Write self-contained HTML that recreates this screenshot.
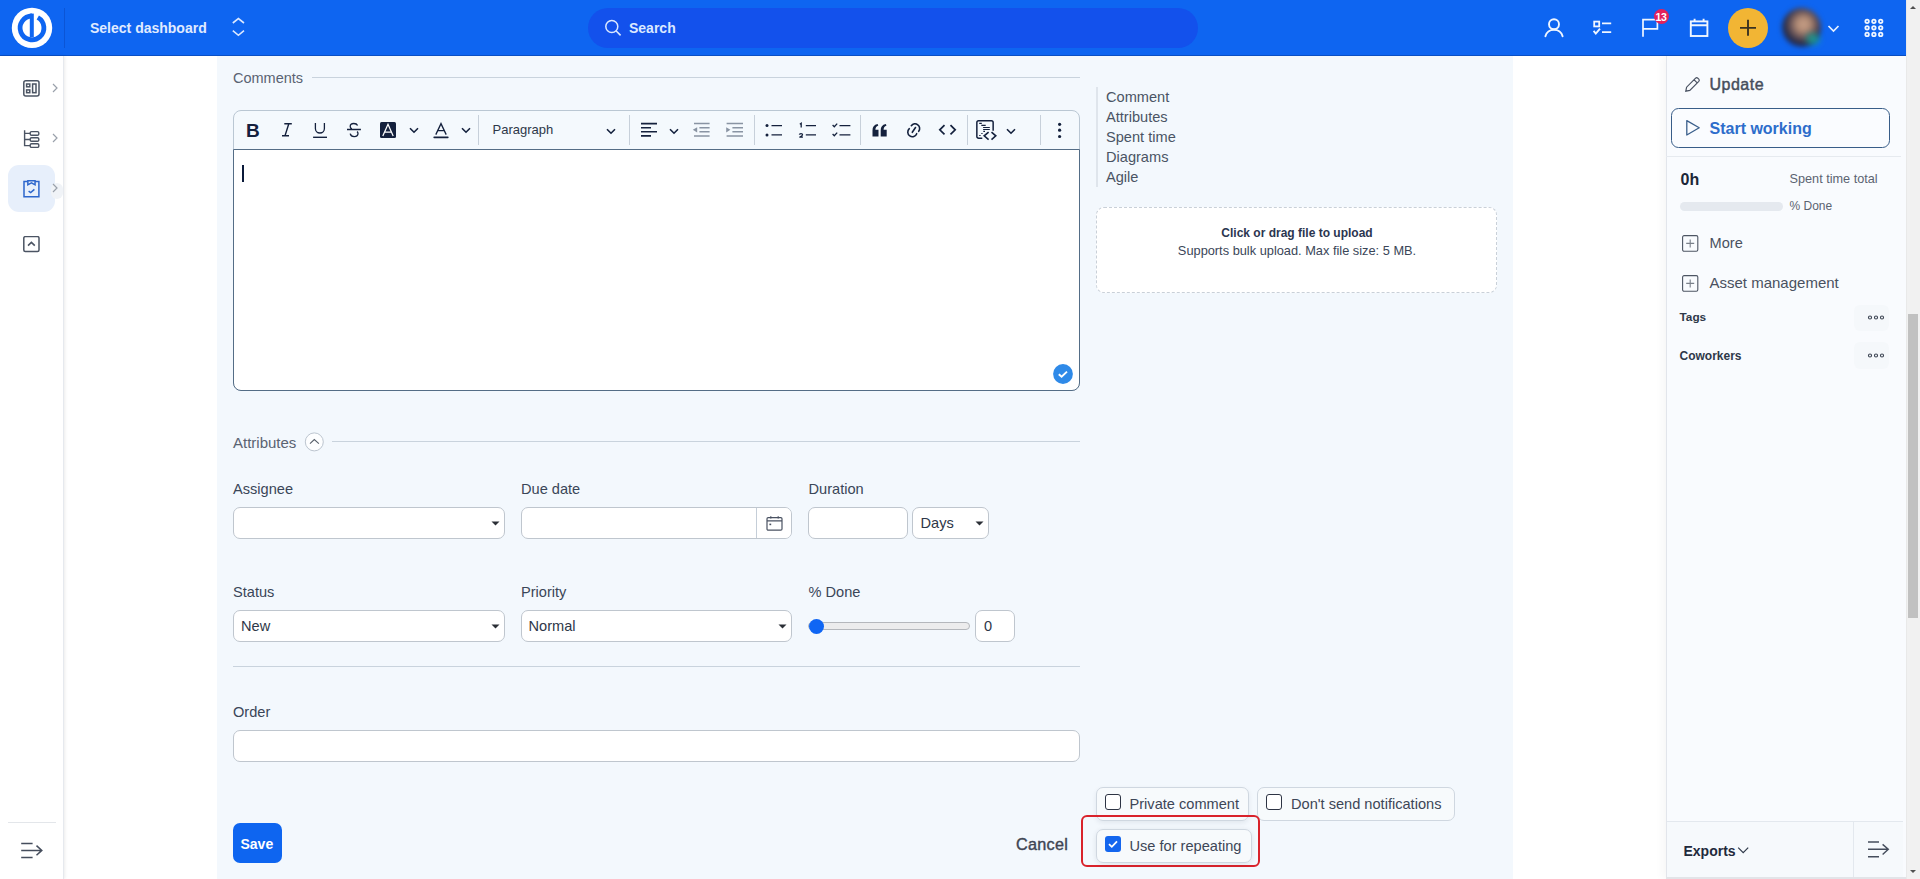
<!DOCTYPE html>
<html><head><meta charset="utf-8">
<style>
*{box-sizing:border-box;margin:0;padding:0}
html,body{width:1920px;height:879px;overflow:hidden;background:#fff;font-family:"Liberation Sans",sans-serif;color:#2e3a4e}
.a{position:absolute}
.t{line-height:1;white-space:nowrap}
svg{display:block}
#hdr{left:0;top:0;width:1906px;height:56px;background:#0e65f1}
#sb{left:0;top:56px;width:64px;height:823px;background:#fff;box-shadow:1px 0 3px rgba(0,0,0,.08);border-right:1px solid #e6e9ee}
#content{left:217px;top:56px;width:1296px;height:823px;background:#f4f8fc}
#rs{left:1666px;top:56px;width:239px;height:823px;background:#f9fbfe;border-left:1px solid #e3e7ec}
#scr{left:1905px;top:0;width:15px;height:879px;background:#f1f1f1;border-left:1px solid #e8e8e8}
.lbl{font-size:14px;color:#3a4658}
.inp{background:#fff;border:1px solid #c5ced8;border-radius:7px}
</style></head><body>
<!-- header -->
<div id="hdr" class="a">
 <svg class="a" style="left:11px;top:7px" width="42" height="42" viewBox="0 0 42 42">
  <circle cx="21" cy="20.9" r="20.2" fill="#fff"/>
  <path d="M21 9 A11.9 11.9 0 1 0 26.8 10.5" fill="none" stroke="#0e65f1" stroke-width="4.8"/>
  <rect x="18.8" y="6.6" width="4" height="23.8" fill="#0e65f1"/>
 </svg>
 <div class="a" style="left:64px;top:8px;width:1px;height:40px;background:#0b55d6"></div>
 <div class="a" style="left:90px;top:18px;font-size:14px;font-weight:700;color:#e0ebff;line-height:20px">Select dashboard</div>
 <svg class="a" style="left:230px;top:16px" width="16" height="22" viewBox="0 0 16 22"><path d="M2.8 7 L8.4 2.6 L14 7 M2.8 14.6 L8.4 19.3 L14 14.6" fill="none" stroke="#dbe8ff" stroke-width="1.6"/></svg>
 <div class="a" style="left:588px;top:8px;width:610px;height:40px;border-radius:20px;background:#1351ec"></div>
 <svg class="a" style="left:603px;top:18px" width="21" height="21" viewBox="0 0 21 21"><circle cx="8.8" cy="8.5" r="6.0" fill="none" stroke="#dbe8ff" stroke-width="1.5"/><path d="M13.2 13 L17.6 17.4" stroke="#dbe8ff" stroke-width="1.6"/></svg>
 <div class="a" style="left:629px;top:18px;font-size:14px;font-weight:700;color:#dce9ff;line-height:20px">Search</div>
 <!-- person -->
 <svg class="a" style="left:1542px;top:16px" width="24" height="24" viewBox="0 0 24 24"><circle cx="12" cy="8.2" r="5" fill="none" stroke="#f0f6ff" stroke-width="1.9"/><path d="M3.4 20.2 A8.8 8.2 0 0 1 20.6 20.2" fill="none" stroke="#f0f6ff" stroke-width="1.9" stroke-linecap="round"/></svg>
 <!-- tasks -->
 <svg class="a" style="left:1590px;top:16px" width="24" height="24" viewBox="0 0 24 24"><rect x="4.2" y="5.6" width="5" height="4.8" fill="none" stroke="#f0f6ff" stroke-width="1.8"/><path d="M12 7.3 H21.2 M12 16.2 H21.2" stroke="#f0f6ff" stroke-width="1.8"/><path d="M3.6 14.8 L5.8 17.6 L10 12.6" fill="none" stroke="#f0f6ff" stroke-width="1.9"/></svg>
 <!-- flag -->
 <svg class="a" style="left:1638px;top:16px" width="24" height="24" viewBox="0 0 24 24"><path d="M5 20.7 V3.6 H19.4 V12.8 H5" fill="none" stroke="#f0f6ff" stroke-width="1.7"/></svg>
 <div class="a" style="left:1653.6px;top:9.2px;width:15px;height:15px;border-radius:50%;background:#e3215c;color:#fff;font-size:10.5px;font-weight:700;text-align:center;line-height:16.5px;letter-spacing:-.4px;text-indent:-.3px">13</div>
 <!-- calendar -->
 <svg class="a" style="left:1687px;top:16px" width="24" height="24" viewBox="0 0 24 24"><rect x="3.8" y="5.4" width="16.6" height="14.6" fill="none" stroke="#f0f6ff" stroke-width="1.9"/><path d="M3.8 9.3 H20.4 M7.6 2.8 V6 M16.6 2.8 V6" stroke="#f0f6ff" stroke-width="1.9"/></svg>
 <!-- plus -->
 <div class="a" style="left:1728px;top:8px;width:40px;height:40px;border-radius:50%;background:#f2b534"></div>
 <svg class="a" style="left:1738px;top:18px" width="20" height="20" viewBox="0 0 20 20"><path d="M10 1.8 V17.8 M2 9.9 H18" stroke="#3b3220" stroke-width="1.9"/></svg>
 <!-- avatar -->
 <div class="a" style="left:1782px;top:8px;width:39px;height:39px;border-radius:50%;background:radial-gradient(circle at 55% 42%,#c8a088 0,#b08a74 22%,#6a5558 42%,#252a45 62%,#1b3a8a 80%,#0e65f1 100%);filter:blur(2.5px)"></div>
 <div class="a" style="left:1806px;top:33px;width:14px;height:12px;border-radius:50%;background:#1aa79a;filter:blur(3px);opacity:.8"></div>
 <svg class="a" style="left:1826px;top:22px" width="15" height="12" viewBox="0 0 15 12"><path d="M2.5 4 L7.5 9 L12.5 4" fill="none" stroke="#e6f0ff" stroke-width="1.7"/></svg>
 <!-- grid -->
 <svg class="a" style="left:1862px;top:16px" width="24" height="24" viewBox="0 0 24 24" fill="none" stroke="#f0f6ff" stroke-width="1.8">
  <circle cx="5.1" cy="5.3" r="1.75"/><circle cx="11.9" cy="5.3" r="1.75"/><circle cx="18.7" cy="5.3" r="1.75"/>
  <circle cx="5.1" cy="11.8" r="1.75"/><circle cx="11.9" cy="11.8" r="1.75"/><circle cx="18.7" cy="11.8" r="1.75"/>
  <circle cx="5.1" cy="18.4" r="1.75"/><circle cx="11.9" cy="18.4" r="1.75"/><circle cx="18.7" cy="18.4" r="1.75"/>
 </svg>
 <div class="a" style="left:0;top:55px;width:1906px;height:1px;background:#0a4fc4"></div>
</div>
<div id="sb" class="a">
 <svg class="a" style="left:23px;top:24px" width="17" height="17" viewBox="0 0 17 17" fill="none" stroke="#4b5463" stroke-width="1.5">
  <rect x="0.8" y="0.8" width="15.2" height="15.2" rx="2"/><rect x="3.6" y="4" width="3.2" height="2.8"/><rect x="3.6" y="9.9" width="3.2" height="2.8"/><rect x="9.6" y="4" width="3.4" height="8.7"/>
 </svg>
 <svg class="a" style="left:50px;top:26px" width="10" height="12" viewBox="0 0 10 12"><path d="M3 2 L7 6 L3 10" fill="none" stroke="#9aa1ab" stroke-width="1.2"/></svg>
 <svg class="a" style="left:23px;top:74px" width="17" height="18" viewBox="0 0 17 18" fill="none" stroke="#4b5463" stroke-width="1.4">
  <path d="M1.6 0.3 V15.6 H7.2 M1.6 3.4 H7.2 M1.6 9.5 H7.2"/><rect x="7.2" y="1.6" width="8.6" height="3.6" rx="1.3"/><rect x="7.2" y="7.7" width="8.6" height="3.6" rx="1.3"/><rect x="7.2" y="13.8" width="8.6" height="3.6" rx="1.3"/>
 </svg>
 <svg class="a" style="left:50px;top:76px" width="10" height="12" viewBox="0 0 10 12"><path d="M3 2 L7 6 L3 10" fill="none" stroke="#9aa1ab" stroke-width="1.2"/></svg>
 <div class="a" style="left:8px;top:109px;width:47px;height:47px;border-radius:11px;background:#e7effb"></div>
 <div class="a" style="left:51px;top:127px;width:12px;height:16px;border-radius:8px;background:#f0f3f7"></div>
 <svg class="a" style="left:22px;top:124px" width="18" height="19" viewBox="0 0 18 19" fill="none" stroke="#2d66cc" stroke-width="1.5">
  <path d="M5.85 1.4 H2 V16.8 H16.9 V1.4 H13.05"/><path d="M5.85 0.85 H13.05 V4.85 L9.45 2.85 L5.85 4.85 Z"/><path d="M6.6 11.1 L8.7 12.6 L12.4 9.4" stroke-width="1.5"/>
 </svg>
 <svg class="a" style="left:50px;top:126px" width="10" height="12" viewBox="0 0 10 12"><path d="M3 2 L7 6 L3 10" fill="none" stroke="#9aa1ab" stroke-width="1.2"/></svg>
 <svg class="a" style="left:23px;top:180px" width="17" height="17" viewBox="0 0 17 17" fill="none" stroke="#4b5463" stroke-width="1.5">
  <rect x="0.8" y="0.6" width="15.2" height="15" rx="1.5"/><path d="M5 9.6 L8.4 6.4 L11.8 9.6" stroke-width="1.6"/>
 </svg>
 <div class="a" style="left:8px;top:766px;width:48px;height:1px;background:#e3e6ea"></div>
 <svg class="a" style="left:19px;top:785px" width="26" height="18" viewBox="0 0 26 18" fill="none" stroke="#454d5c" stroke-width="1.5">
  <path d="M2.2 2.4 H13.6 M2.2 9.4 H22.8 M2.2 16.5 H13.6 M17.5 4.6 L22.8 9.4 L17.5 14.2"/>
 </svg>
</div>
<div class="a" style="left:217px;top:56px;width:1296px;height:823px;background:#f3f8fd"></div>
<div class="a t" style="left:233px;top:70.73px;font-size:14.5px;font-weight:400;color:#5a6372;">Comments</div>
<div class="a" style="left:312px;top:77px;width:768px;height:1px;background:#c9d3dd"></div>
<div class="a" style="left:233px;top:110px;width:847px;height:281px;border:1px solid #bac7d3;border-radius:8px;background:#f4f9fd"></div>
<div class="a" style="left:233px;top:149px;width:847px;height:242px;border:1px solid #546d86;border-radius:0 0 8px 8px;background:#fff"></div>
<div class="a" style="left:242px;top:165px;width:2px;height:17px;background:#0b1a3a"></div>
<svg class="a" style="left:1053px;top:364px" width="20" height="20" viewBox="0 0 20 20" ><circle cx="10" cy="10" r="9.9" fill="#2f8ae8"/><path d="M5.8 10.2 L8.6 12.8 L14 7.6" fill="none" stroke="#fff" stroke-width="1.9"/></svg>
<div class="a" style="left:478px;top:115px;width:1px;height:30px;background:#c7d0da"></div>
<div class="a" style="left:629px;top:115px;width:1px;height:30px;background:#c7d0da"></div>
<div class="a" style="left:754px;top:115px;width:1px;height:30px;background:#c7d0da"></div>
<div class="a" style="left:860px;top:115px;width:1px;height:30px;background:#c7d0da"></div>
<div class="a" style="left:967px;top:115px;width:1px;height:30px;background:#c7d0da"></div>
<div class="a" style="left:1040px;top:115px;width:1px;height:30px;background:#c7d0da"></div>
<div class="a t" style="left:246px;top:120.92px;font-size:19px;font-weight:700;color:#14213d;font-family:"Liberation Sans";">B</div>
<svg class="a" style="left:280px;top:122px" width="14" height="16" viewBox="0 0 14 16" ><path d="M4.3 1.7 H11.8 M2 13.7 H9 M8.8 1.7 L5 13.7" fill="none" stroke="#14213d" stroke-width="1.4"/></svg>
<svg class="a" style="left:312px;top:122px" width="16" height="17" viewBox="0 0 16 17" ><path d="M3.4 1.1 V6.5 A4.5 4.5 0 0 0 12.4 6.5 V1.1" fill="none" stroke="#14213d" stroke-width="1.3"/><path d="M1.1 15.3 H15" stroke="#14213d" stroke-width="1.4"/></svg>
<svg class="a" style="left:346px;top:122px" width="16" height="17" viewBox="0 0 16 17" ><path d="M11.6 3.6 C11 2.2 9.6 1.5 7.8 1.5 C5.6 1.5 4.2 2.7 4.2 4.4 C4.2 5.4 4.8 6.3 5.8 6.9 M4.2 11.6 C4.6 13.6 6.2 14.6 8.2 14.6 C10.4 14.6 12 13.5 12 11.6 C12 10.6 11.6 10 11 9.6 M1 7.5 H14.9" fill="none" stroke="#14213d" stroke-width="1.3"/></svg>
<svg class="a" style="left:380px;top:122px" width="16" height="16" viewBox="0 0 16 16" ><rect x="0" y="0" width="16" height="16" rx="1.5" fill="#14213d"/><path d="M2.8 13.9 L8 2.3 L13.2 13.9 M4.8 10.2 H11.2" fill="none" stroke="#fff" stroke-width="1.25"/></svg>
<svg class="a" style="left:408.5px;top:126.8px" width="10" height="7" viewBox="0 0 10 7" ><path d="M1 1.2 L5 5.2 L9 1.2" fill="none" stroke="#14213d" stroke-width="1.6"/></svg>
<svg class="a" style="left:433px;top:122px" width="16" height="17" viewBox="0 0 16 17" ><path d="M2.8 12.6 L8 1.6 L13.2 12.6 M4.8 8.6 H11.2" fill="none" stroke="#14213d" stroke-width="1.3"/><path d="M1.2 15.3 H14.8" stroke="#14213d" stroke-width="1.7" stroke-linecap="round"/></svg>
<svg class="a" style="left:461px;top:126.8px" width="10" height="7" viewBox="0 0 10 7" ><path d="M1 1.2 L5 5.2 L9 1.2" fill="none" stroke="#14213d" stroke-width="1.6"/></svg>
<div class="a t" style="left:492.5px;top:123.00px;font-size:13px;font-weight:400;color:#2d3748;">Paragraph</div>
<svg class="a" style="left:606px;top:128px" width="10" height="7" viewBox="0 0 10 7" ><path d="M1 1.2 L5 5.2 L9 1.2" fill="none" stroke="#14213d" stroke-width="1.6"/></svg>
<svg class="a" style="left:640px;top:122px" width="18" height="16" viewBox="0 0 18 16" ><path d="M1 1.6 H17 M1 5.8 H11 M1 9.7 H17 M1 13.9 H11" fill="none" stroke="#14213d" stroke-width="1.6"/></svg>
<svg class="a" style="left:669px;top:128px" width="10" height="7" viewBox="0 0 10 7" ><path d="M1 1.2 L5 5.2 L9 1.2" fill="none" stroke="#14213d" stroke-width="1.6"/></svg>
<svg class="a" style="left:691px;top:122px" width="20" height="16" viewBox="0 0 20 16" ><path d="M3 1.6 H18.6 M8.4 5.8 H18.6 M8.4 9.7 H18.6 M3 13.9 H18.6" fill="none" stroke="#8994a3" stroke-width="1.5"/><path d="M6.2 5.2 L1.8 7.8 L6.2 10.4 Z" fill="#8994a3"/></svg>
<svg class="a" style="left:725px;top:122px" width="20" height="16" viewBox="0 0 20 16" ><path d="M1.6 1.6 H18 M7.4 5.8 H18 M7.4 9.7 H18 M1.6 13.9 H18" fill="none" stroke="#8994a3" stroke-width="1.5"/><path d="M1.2 5.2 L5.4 7.8 L1.2 10.4 Z" fill="#8994a3"/></svg>
<svg class="a" style="left:764px;top:122px" width="20" height="16" viewBox="0 0 20 16" ><circle cx="3" cy="3.6" r="1.5" fill="#14213d"/><circle cx="3" cy="12.9" r="1.5" fill="#14213d"/><path d="M7.5 3.6 H18 M7.5 12.9 H18" stroke="#14213d" stroke-width="1.3"/></svg>
<svg class="a" style="left:798px;top:122px" width="20" height="17" viewBox="0 0 20 17" ><path d="M1.8 2.2 L3.2 1.3 V5.6" fill="none" stroke="#14213d" stroke-width="1.3"/><path d="M1.3 12.6 C1.4 11.9 2.1 11.6 3 11.6 C3.9 11.6 4.6 12.1 4.6 12.8 C4.6 13.6 3.6 14.2 1.4 15.2 H4.9" fill="none" stroke="#14213d" stroke-width="1.2"/><path d="M7.8 3.6 H18 M7.8 12.9 H18" stroke="#14213d" stroke-width="1.3"/></svg>
<svg class="a" style="left:831px;top:122px" width="21" height="16" viewBox="0 0 21 16" ><path d="M1.6 3 L3.3 4.7 L6.2 1.6 M1.6 12 L3.3 13.7 L6.2 10.6" fill="none" stroke="#14213d" stroke-width="1.3"/><path d="M8.5 3.6 H19.4 M8.5 12.9 H19.4" stroke="#14213d" stroke-width="1.3"/></svg>
<svg class="a" style="left:871px;top:122px" width="18" height="16" viewBox="0 0 18 16" ><path d="M1.5 14.5 V8.5 C1.5 5 3 2.7 6.6 2 L7.3 3.5 C5.4 4.2 4.5 5.6 4.4 7.8 H7.5 V14.5 Z M9.7 14.5 V8.5 C9.7 5 11.2 2.7 14.8 2 L15.5 3.5 C13.6 4.2 12.7 5.6 12.6 7.8 H15.7 V14.5 Z" fill="#14213d"/></svg>
<svg class="a" style="left:905px;top:121px" width="17" height="18" viewBox="0 0 17 18" ><path d="M6.3 4.7 A4.6 4.6 0 1 1 13.7 10.3 M4.3 7.7 A4.6 4.6 0 1 0 11.7 12.7 M7.3 11.3 L10.5 6.5" fill="none" stroke="#14213d" stroke-width="1.6" stroke-linecap="round"/></svg>
<svg class="a" style="left:938px;top:124px" width="19" height="12" viewBox="0 0 19 12" ><path d="M6.5 1.2 L1.8 5.8 L6.5 10.4 M12.5 1.2 L17.2 5.8 L12.5 10.4" fill="none" stroke="#14213d" stroke-width="1.7"/></svg>
<svg class="a" style="left:975px;top:119px" width="22" height="22" viewBox="0 0 22 22" ><path d="M7.3 19.15 H3.6 A1.75 1.75 0 0 1 1.85 17.4 V3.5 A1.75 1.75 0 0 1 3.6 1.75 H16.4 A1.75 1.75 0 0 1 18.15 3.5 V11.7" fill="none" stroke="#14213d" stroke-width="1.5"/><path d="M4.2 4.4 H6.8 M6.3 6.4 H10.7 M8.1 8.5 H14.8 M8.1 10.5 H14.8 M8.3 12.4 H10 M6.3 14.5 H7.6 M4.2 16.5 H5.6" stroke="#14213d" stroke-width="1.1"/><path d="M13.6 13.1 L9.2 16.8 L13.6 20.6 M16.5 13.1 L20.8 16.8 L16.5 20.6" fill="none" stroke="#14213d" stroke-width="1.6"/></svg>
<svg class="a" style="left:1005.5px;top:128px" width="10" height="7" viewBox="0 0 10 7" ><path d="M1 1.2 L5 5.2 L9 1.2" fill="none" stroke="#14213d" stroke-width="1.6"/></svg>
<svg class="a" style="left:1056px;top:121px" width="7" height="18" viewBox="0 0 7 18" ><circle cx="3.6" cy="3.3" r="1.6" fill="#14213d"/><circle cx="3.6" cy="9.2" r="1.6" fill="#14213d"/><circle cx="3.6" cy="15.5" r="1.6" fill="#14213d"/></svg>
<div class="a" style="left:1096px;top:87px;width:2px;height:100px;background:#dfe5ec"></div>
<div class="a t" style="left:1106px;top:89.64px;font-size:14.6px;font-weight:400;color:#4a5464;">Comment</div>
<div class="a t" style="left:1106px;top:109.64px;font-size:14.6px;font-weight:400;color:#4a5464;">Attributes</div>
<div class="a t" style="left:1106px;top:129.64px;font-size:14.6px;font-weight:400;color:#4a5464;">Spent time</div>
<div class="a t" style="left:1106px;top:149.64px;font-size:14.6px;font-weight:400;color:#4a5464;">Diagrams</div>
<div class="a t" style="left:1106px;top:169.64px;font-size:14.6px;font-weight:400;color:#4a5464;">Agile</div>
<div class="a" style="left:1096px;top:207px;width:401px;height:86px;background:#fff;border:1px dashed #c9d0d8;border-radius:8px"></div>
<div class="a" style="left:1097px;top:225px;width:400px;text-align:center;font-size:12px;font-weight:700;color:#2b3650;line-height:16px">Click or drag file to upload</div>
<div class="a" style="left:1097px;top:242.5px;width:400px;text-align:center;font-size:12.8px;color:#3a4658;line-height:16px">Supports bulk upload. Max file size: 5 MB.</div>
<div class="a t" style="left:233px;top:434.80px;font-size:15px;font-weight:400;color:#5a6372;">Attributes</div>
<svg class="a" style="left:304px;top:431.5px" width="21" height="21" viewBox="0 0 21 21" ><circle cx="10.3" cy="9.9" r="9" fill="#fdfeff" stroke="#bcc5cf" stroke-width="1"/><path d="M6 11.6 L10.3 7.6 L14.9 11.6" fill="none" stroke="#555d68" stroke-width="1.1"/></svg>
<div class="a" style="left:332px;top:441px;width:748px;height:1px;background:#c9d3dd"></div>
<div class="a t" style="left:233px;top:482.14px;font-size:14.6px;font-weight:400;color:#3a4658;">Assignee</div>
<div class="a" style="left:233px;top:507px;width:272px;height:32px;background:#fff;border:1px solid #bfc6ce;border-radius:7px"></div>
<svg class="a" style="left:491px;top:520.5px" width="9" height="5" viewBox="0 0 9 5" ><path d="M0.5 0.5 H8.5 L4.5 4.5 Z" fill="#2b2f36"/></svg>
<div class="a t" style="left:521px;top:482.14px;font-size:14.6px;font-weight:400;color:#3a4658;">Due date</div>
<div class="a" style="left:521px;top:507px;width:271px;height:32px;background:#fff;border:1px solid #bfc6ce;border-radius:7px"></div>
<div class="a" style="left:756px;top:508px;width:1px;height:30px;background:#c5ced8"></div>
<div class="a" style="left:757px;top:508px;width:34px;height:30px;background:#fff;border-radius:0 6px 6px 0"></div>
<svg class="a" style="left:766px;top:515px" width="17" height="16" viewBox="0 0 17 16" ><rect x="1" y="2.6" width="15" height="12.6" rx="1.2" fill="none" stroke="#4a5262" stroke-width="1.2"/><path d="M1 5.8 H16 M4.8 1.2 V3.6 M12.2 1.2 V3.6" stroke="#4a5262" stroke-width="1.2"/><rect x="3.4" y="8.6" width="1.8" height="1.6" fill="#4a5262"/></svg>
<div class="a t" style="left:808.5px;top:482.14px;font-size:14.6px;font-weight:400;color:#3a4658;">Duration</div>
<div class="a" style="left:808px;top:507px;width:100px;height:32px;background:#fff;border:1px solid #bfc6ce;border-radius:7px"></div>
<div class="a" style="left:912px;top:507px;width:77px;height:32px;background:#fff;border:1px solid #bfc6ce;border-radius:7px"></div>
<div class="a t" style="left:920.5px;top:515.64px;font-size:14.6px;font-weight:400;color:#2e3748;">Days</div>
<svg class="a" style="left:975px;top:520.5px" width="9" height="5" viewBox="0 0 9 5" ><path d="M0.5 0.5 H8.5 L4.5 4.5 Z" fill="#2b2f36"/></svg>
<div class="a t" style="left:233px;top:585.14px;font-size:14.6px;font-weight:400;color:#3a4658;">Status</div>
<div class="a" style="left:233px;top:610px;width:272px;height:32px;background:#fff;border:1px solid #bfc6ce;border-radius:7px"></div>
<div class="a t" style="left:241px;top:618.64px;font-size:14.6px;font-weight:400;color:#2e3748;">New</div>
<svg class="a" style="left:491px;top:623.5px" width="9" height="5" viewBox="0 0 9 5" ><path d="M0.5 0.5 H8.5 L4.5 4.5 Z" fill="#2b2f36"/></svg>
<div class="a t" style="left:521px;top:585.14px;font-size:14.6px;font-weight:400;color:#3a4658;">Priority</div>
<div class="a" style="left:521px;top:610px;width:271px;height:32px;background:#fff;border:1px solid #bfc6ce;border-radius:7px"></div>
<div class="a t" style="left:528.5px;top:618.64px;font-size:14.6px;font-weight:400;color:#2e3748;">Normal</div>
<svg class="a" style="left:778px;top:623.5px" width="9" height="5" viewBox="0 0 9 5" ><path d="M0.5 0.5 H8.5 L4.5 4.5 Z" fill="#2b2f36"/></svg>
<div class="a t" style="left:808.5px;top:585.14px;font-size:14.6px;font-weight:400;color:#3a4658;">% Done</div>
<div class="a" style="left:808px;top:622px;width:162px;height:8px;background:#ececed;border:1px solid #b4b7bc;border-radius:4px"></div>
<div class="a" style="left:808.5px;top:618.5px;width:15px;height:15px;background:#0f66f4;border-radius:50%"></div>
<div class="a" style="left:975px;top:610px;width:40px;height:32px;background:#fff;border:1px solid #bfc6ce;border-radius:7px"></div>
<div class="a t" style="left:984px;top:618.64px;font-size:14.6px;font-weight:400;color:#2e3748;">0</div>
<div class="a" style="left:233px;top:666px;width:847px;height:1px;background:#c9d3dd"></div>
<div class="a t" style="left:233px;top:705.14px;font-size:14.6px;font-weight:400;color:#3a4658;">Order</div>
<div class="a" style="left:233px;top:730px;width:847px;height:32px;background:#fff;border:1px solid #bfc6ce;border-radius:7px"></div>
<div class="a" style="left:233px;top:823px;width:49px;height:40px;background:#0e65f0;border-radius:7px"></div>
<div class="a t" style="left:240.5px;top:837.15px;font-size:14px;font-weight:700;color:#fff;">Save</div>
<div class="a t" style="left:1016px;top:836.09px;font-size:16.2px;font-weight:400;color:#3e4553;-webkit-text-stroke:0.4px #3e4553;letter-spacing:0.3px">Cancel</div>
<div class="a" style="left:1096px;top:787px;width:153px;height:34px;box-shadow:0 2px 5px rgba(30,40,60,.08);border-radius:7px"></div>
<div class="a" style="left:1096px;top:787px;width:153px;height:34px;background:#f7fafc;border:1px solid #cfd7e0;border-radius:7px"></div>
<div class="a" style="left:1105px;top:794px;width:16px;height:16px;background:#fff;border:1.5px solid #2d3444;border-radius:3px"></div>
<div class="a t" style="left:1129.5px;top:797.14px;font-size:14.6px;font-weight:400;color:#3d4657;">Private comment</div>
<div class="a" style="left:1257px;top:787px;width:198px;height:34px;background:#f7fafc;border:1px solid #cfd7e0;border-radius:7px"></div>
<div class="a" style="left:1266px;top:794px;width:16px;height:16px;background:#fff;border:1.5px solid #2d3444;border-radius:3px"></div>
<div class="a t" style="left:1291px;top:797.14px;font-size:14.6px;font-weight:400;color:#3d4657;">Don't send notifications</div>
<div class="a" style="left:1081px;top:815px;width:179px;height:52px;border:2px solid #d9222b;border-radius:6px"></div>
<div class="a" style="left:1096px;top:829px;width:156px;height:34px;box-shadow:0 1px 5px rgba(30,40,60,.10);border-radius:7px"></div>
<div class="a" style="left:1096px;top:829px;width:156px;height:34px;background:#f7fafc;border:1px solid #cfd7e0;border-radius:7px"></div>
<div class="a" style="left:1105px;top:836px;width:16px;height:16px;background:#1466ee;border-radius:3px"></div>
<svg class="a" style="left:1105px;top:836px" width="16" height="16" viewBox="0 0 16 16" ><path d="M4 8.2 L6.8 10.8 L12 5.4" fill="none" stroke="#fff" stroke-width="1.8"/></svg>
<div class="a t" style="left:1129.5px;top:839.14px;font-size:14.6px;font-weight:400;color:#3d4657;">Use for repeating</div>
<div class="a" style="left:1666px;top:56px;width:240px;height:823px;background:#f9fbfe;border-left:1px solid #e2e5eb;box-shadow:-4px 0 8px rgba(0,0,0,.035)"></div>
<svg class="a" style="left:1684px;top:76px" width="17" height="17" viewBox="0 0 17 17" ><path d="M1.8 15.2 L2.6 11.2 L11.6 2.2 A1.6 1.6 0 0 1 13.8 2.2 L14.8 3.2 A1.6 1.6 0 0 1 14.8 5.4 L5.8 14.4 Z M10.2 3.8 L13.2 6.8" fill="none" stroke="#4a5262" stroke-width="1.2"/></svg>
<div class="a t" style="left:1709.5px;top:77.06px;font-size:16px;font-weight:400;color:#474e5c;-webkit-text-stroke:0.45px #474e5c;letter-spacing:0.5px">Update</div>
<div class="a" style="left:1671px;top:108px;width:219px;height:40px;border:1.4px solid #385d88;border-radius:7.5px;background:#fafcff"></div>
<svg class="a" style="left:1685px;top:119px" width="16" height="18" viewBox="0 0 16 18" ><path d="M1.8 1.6 L14.2 8.8 L1.8 16 Z" fill="none" stroke="#3a5f8c" stroke-width="1.3" stroke-linejoin="round"/></svg>
<div class="a t" style="left:1709.5px;top:121.46px;font-size:16px;font-weight:700;color:#2d6dcb;">Start working</div>
<div class="a" style="left:1666px;top:156px;width:235px;height:1px;background:#e6eaef"></div>
<div class="a t" style="left:1680.5px;top:172.46px;font-size:16px;font-weight:700;color:#1c2638;">0h</div>
<div class="a t" style="left:1789.5px;top:172.75px;font-size:12.7px;font-weight:400;color:#5b6371;">Spent time total</div>
<div class="a" style="left:1680px;top:202px;width:103px;height:9px;background:#e5e9ef;border-radius:4.5px"></div>
<div class="a t" style="left:1789.5px;top:199.84px;font-size:12px;font-weight:400;color:#5b6371;">% Done</div>
<svg class="a" style="left:1681.5px;top:234.5px" width="17" height="17" viewBox="0 0 17 17" ><rect x="0.6" y="0.6" width="15.2" height="15.6" rx="1.5" fill="none" stroke="#4d5563" stroke-width="1.1"/><path d="M8.2 4.4 V12.4 M4.2 8.4 H12.2" stroke="#7a808a" stroke-width="1.1"/></svg>
<div class="a t" style="left:1709.5px;top:235.64px;font-size:14.6px;font-weight:400;color:#4a5160;">More</div>
<svg class="a" style="left:1681.5px;top:274.5px" width="17" height="17" viewBox="0 0 17 17" ><rect x="0.6" y="0.6" width="15.2" height="15.6" rx="1.5" fill="none" stroke="#4d5563" stroke-width="1.1"/><path d="M8.2 4.4 V12.4 M4.2 8.4 H12.2" stroke="#7a808a" stroke-width="1.1"/></svg>
<div class="a t" style="left:1709.5px;top:275.30px;font-size:15px;font-weight:400;color:#4a5160;">Asset management</div>
<div class="a t" style="left:1679.5px;top:312.01px;font-size:11.8px;font-weight:700;color:#2e3849;">Tags</div>
<div class="a" style="left:1854px;top:305px;width:35px;height:26px;background:#f5f8fb;border-radius:6px"></div>
<svg class="a" style="left:1866px;top:313.4px" width="19" height="9" viewBox="0 0 19 9" ><circle cx="4" cy="4.5" r="1.55" fill="none" stroke="#3e4654" stroke-width="1.1"/><circle cx="10" cy="4.5" r="1.55" fill="none" stroke="#3e4654" stroke-width="1.1"/><circle cx="16" cy="4.5" r="1.55" fill="none" stroke="#3e4654" stroke-width="1.1"/></svg>
<div class="a t" style="left:1679.5px;top:349.84px;font-size:12px;font-weight:700;color:#2e3849;">Coworkers</div>
<div class="a" style="left:1854px;top:342px;width:35px;height:27px;background:#f5f8fb;border-radius:6px"></div>
<svg class="a" style="left:1866px;top:351.4px" width="19" height="9" viewBox="0 0 19 9" ><circle cx="4" cy="4.5" r="1.55" fill="none" stroke="#3e4654" stroke-width="1.1"/><circle cx="10" cy="4.5" r="1.55" fill="none" stroke="#3e4654" stroke-width="1.1"/><circle cx="16" cy="4.5" r="1.55" fill="none" stroke="#3e4654" stroke-width="1.1"/></svg>
<div class="a" style="left:1667px;top:821px;width:236px;height:58px;background:#f6f9fc;border-top:1px solid #e3e8ee"></div>
<div class="a" style="left:1853px;top:822px;width:1px;height:57px;background:#e3e8ee"></div>
<div class="a t" style="left:1683.5px;top:843.65px;font-size:14px;font-weight:700;color:#1f2a3c;">Exports</div>
<svg class="a" style="left:1737px;top:846px" width="13" height="9" viewBox="0 0 13 9" ><path d="M1.2 1.6 L6.2 6.6 L11.2 1.6" fill="none" stroke="#2e3849" stroke-width="1.2"/></svg>
<svg class="a" style="left:1865px;top:840px" width="26" height="19" viewBox="0 0 26 19" ><path d="M3 2 H14 M3 9.3 H23.3 M3 16.7 H14 M17.6 4.4 L23.3 9.3 L17.6 14.4" fill="none" stroke="#454d5c" stroke-width="1.4"/></svg>
<div class="a" style="left:1666px;top:877px;width:240px;height:2px;background:#e2e4e8"></div>
<div class="a" style="left:1906px;top:0px;width:14px;height:879px;background:#f1f1f1;border-left:1px solid #e9e9e9"></div>
<svg class="a" style="left:1908px;top:3px" width="10" height="8" viewBox="0 0 10 8" ><path d="M2 6 L5 3 L8 6 Z" fill="#505050"/></svg>
<svg class="a" style="left:1908px;top:868px" width="10" height="8" viewBox="0 0 10 8" ><path d="M2 2 L5 5 L8 2 Z" fill="#505050"/></svg>
<div class="a" style="left:1908px;top:314px;width:10px;height:304px;background:#c1c1c1"></div>
</body></html>
